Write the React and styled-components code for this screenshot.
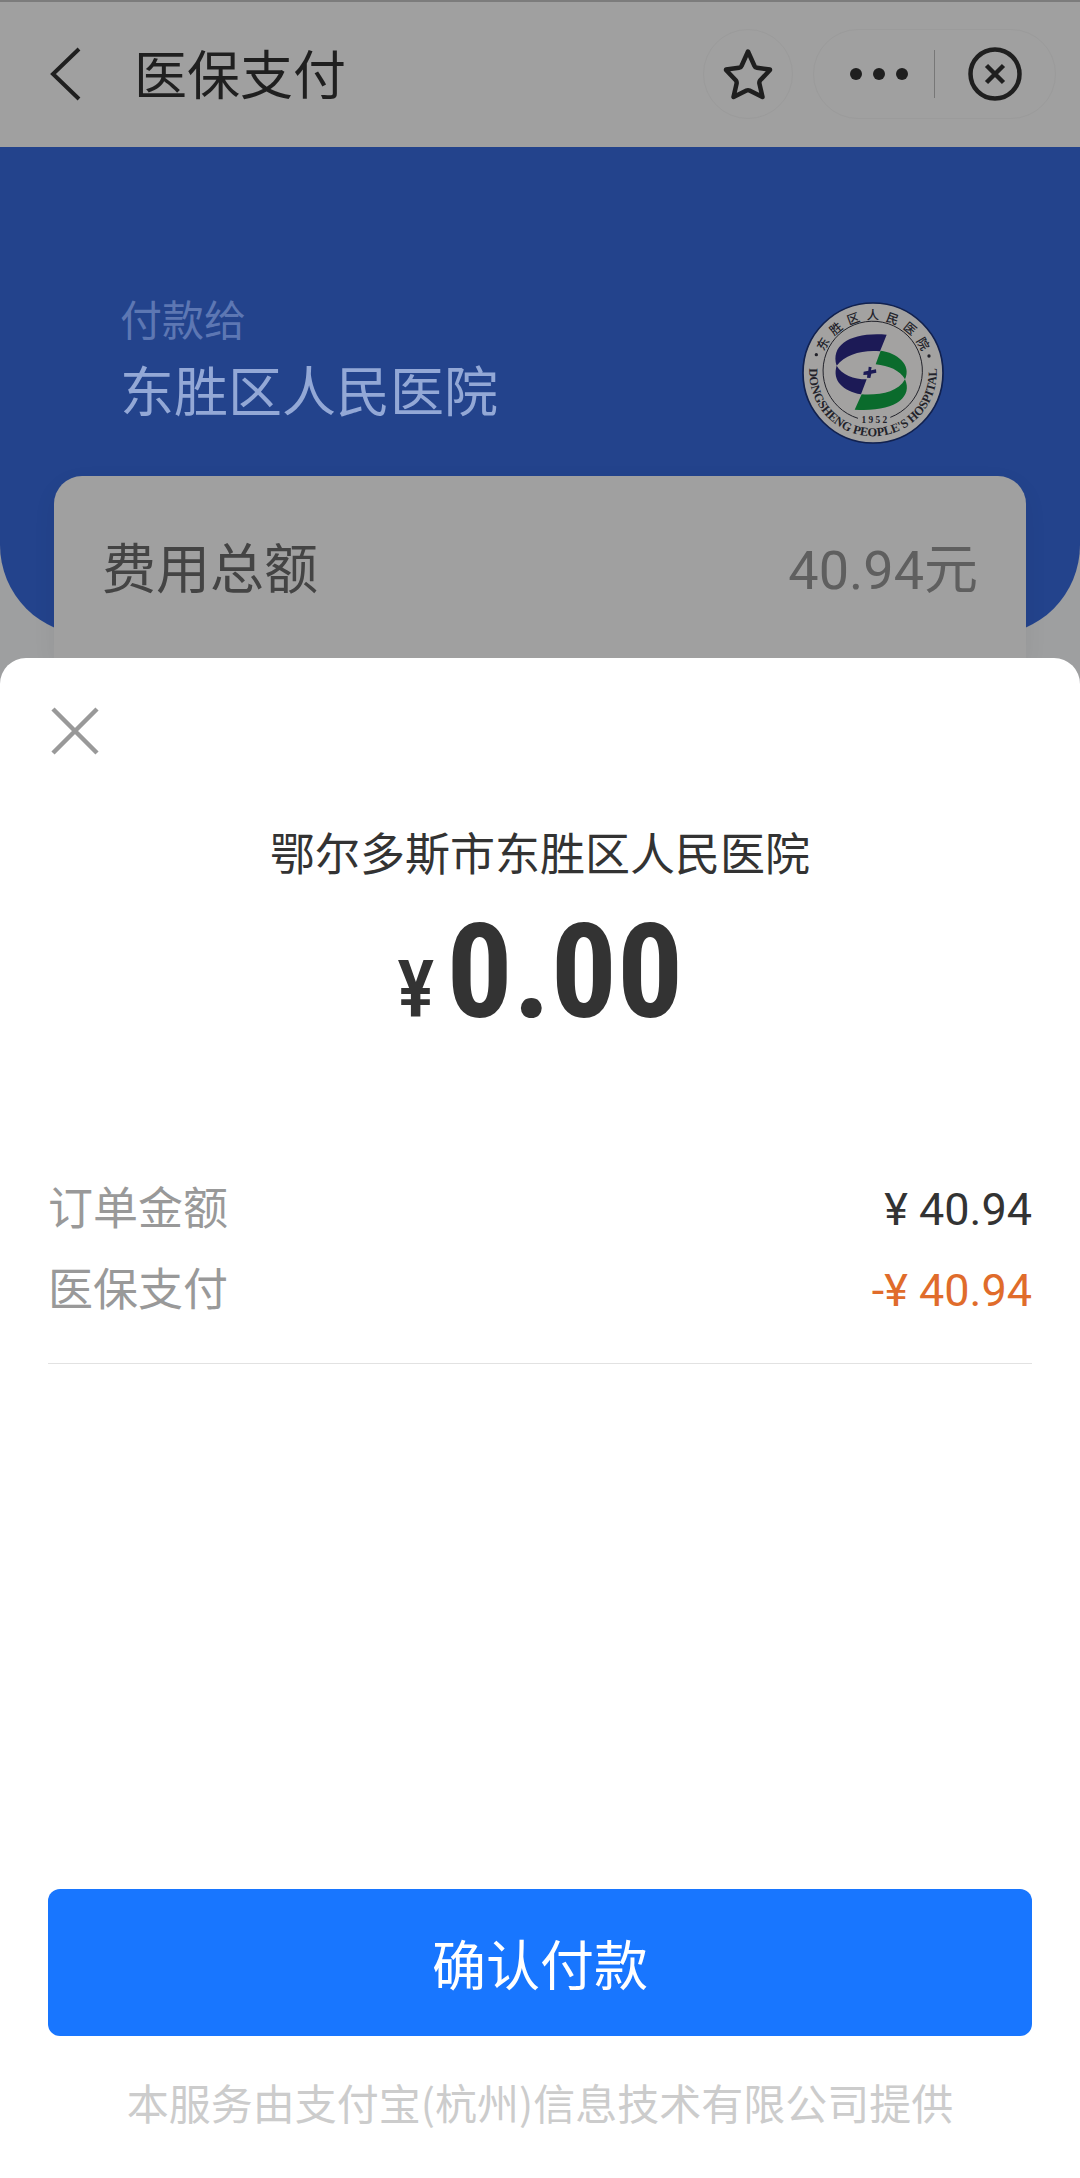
import React, { useState } from "react";
import styled, { createGlobalStyle } from "styled-components";

const GlobalStyle = createGlobalStyle`
    * {
        box-sizing: border-box;
    }

    body {
        margin: 0;
        background-color: #9e9fa0;
        font-family: "Noto Sans CJK SC", sans-serif;
    }

    button {
        padding: 0;
        border: none;
        background: none;
        font-family: inherit;
        color: inherit;
        cursor: pointer;
    }

    svg {
        display: block;
    }
`;

const Page = styled.div`
    display: flex;
    flex-direction: column;
    min-height: 100vh;
`;

const NavBar = styled.header`
    display: flex;
    align-items: center;
    height: 147px;
    padding: 0 24px 0 42px;
    background-color: #a0a0a0;
    box-shadow: inset 0 2px 0 #7c7c7c;
    color: #1f1f1f;
`;

const BackButton = styled.button`
    padding: 0 8px;
`;

const NavTitle = styled.h1`
    flex: 1;
    margin: 0 0 0 44px;
    padding-bottom: 4px;
    font-size: 53px;
    line-height: 72px;
    font-weight: 400;
`;

const StarButton = styled.button`
    display: flex;
    align-items: center;
    justify-content: center;
    width: 90px;
    height: 90px;
    margin-right: 20px;
    border: 1px solid #9b9b9b;
    border-radius: 45px;
`;

const Capsule = styled.div`
    display: flex;
    align-items: center;
    height: 90px;
    border: 1px solid #9b9b9b;
    border-radius: 45px;
`;

const CapsuleButton = styled.button`
    display: flex;
    align-items: center;
    justify-content: ${props => props.$align || "center"};
    width: 120px;
    height: 88px;
    padding-right: ${props => (props.$align ? "26px" : "0")};
`;

const CapsuleLine = styled.span`
    width: 1px;
    height: 48px;
    background-color: #777777;
`;

const Hero = styled.section`
    display: flex;
    justify-content: space-between;
    align-items: flex-start;
    height: 488px;
    padding: 141px 135px 0 120px;
    border-radius: 0 0 90px 90px;
    background-color: #23438c;
`;

const PayLabel = styled.p`
    margin: 0;
    font-size: 42px;
    line-height: 60px;
    color: #5d77b3;
`;

const PayName = styled.h2`
    margin: 0;
    font-size: 54px;
    line-height: 82px;
    font-weight: 400;
    color: #93a8d6;
`;

const LogoBox = styled.div`
    padding-top: 13px;
`;

const TotalCard = styled.section`
    display: flex;
    justify-content: space-between;
    align-items: baseline;
    height: 182px;
    margin: -159px 54px 0;
    padding: 54px 48px 0;
    border-radius: 28px 28px 0 0;
    background-color: #a0a0a0;
    box-shadow: 0 8px 24px rgba(0, 0, 0, 0.06);
    font-size: 54px;
    line-height: 72px;
    color: #444444;
`;

const TotalValue = styled.span`
    font-family: Roboto, "Noto Sans CJK SC", sans-serif;
    color: #5f5f5f;
`;

const Sheet = styled.section`
    position: relative;
    display: flex;
    flex: 1;
    flex-direction: column;
    padding: 46px 48px;
    border-radius: 26px 26px 0 0;
    background-color: #ffffff;
    color: #333333;
`;

const CloseButton = styled.button`
    align-self: flex-start;
`;

const Merchant = styled.h2`
    margin: 62px 0 0;
    font-size: 45px;
    line-height: 64px;
    font-weight: 400;
    text-align: center;
`;

const Amount = styled.p`
    display: flex;
    justify-content: center;
    align-items: baseline;
    gap: 12px;
    height: 136px;
    margin: 20px 0 0;
    font-family: "Roboto Condensed", "Liberation Sans Narrow", sans-serif;
    font-size: 131px;
    line-height: 136px;
    font-weight: 700;
`;

const Currency = styled.span`
    font-size: 80px;
    font-weight: 500;
`;

const Bill = styled.dl`
    margin: 125px 0 0;
    padding-bottom: 36px;
    border-bottom: 1px solid #e2e2e2;
`;

const BillRow = styled.div`
    display: flex;
    justify-content: space-between;
    align-items: baseline;
    height: 81px;
    font-size: 45px;
    line-height: 81px;
`;

const BillLabel = styled.dt`
    color: #999999;
`;

const BillValue = styled.dd`
    margin: 0;
    font-family: Roboto, "Noto Sans CJK SC", sans-serif;
    color: ${props => (props.$discount ? "#e06c2b" : "#333333")};
`;

const ConfirmButton = styled.button`
    height: 147px;
    margin-top: auto;
    border-radius: 12px;
    background-color: #1876ff;
    color: #ffffff;
    font-size: 54px;
`;

const Provider = styled.p`
    margin: 36px 0 0;
    font-size: 42px;
    line-height: 60px;
    text-align: center;
    color: #cccccc;
`;

const BackIcon = () => (
    <svg width="32" height="54" viewBox="0 0 32 54" fill="none" stroke="currentColor" strokeWidth="4">
        <path d="M29 2 3 27l26 25" />
    </svg>
);

const StarIcon = () => (
    <svg width="52" height="54" viewBox="0 0 52 54" fill="none" stroke="currentColor" strokeWidth="4.5" strokeLinejoin="round">
        <path d="M26 4.5 32.5 19Q33 20.500 35 20.800L48 22.500V23L38 33.500Q37 35 37.500 37L40.500 50 27.500 43.500Q26 42.800 24.500 43.500L11.500 50 14.500 37Q15 35 14 33.500L4 23V22.500L17 20.800Q19 20.500 19.500 19Z" />
    </svg>
);

const DotsIcon = () => (
    <svg width="58" height="12" viewBox="0 0 58 12" fill="currentColor">
        <circle cx="6" cy="6" r="6" />
        <circle cx="29" cy="6" r="6" />
        <circle cx="52" cy="6" r="6" />
    </svg>
);

const ExitIcon = () => (
    <svg width="54" height="54" viewBox="0 0 54 54" fill="none" stroke="currentColor" strokeWidth="4.5">
        <circle cx="27" cy="27" r="24.500" />
        <path d="m18.500 18.500 17 17m0-17-17 17" />
    </svg>
);

const CloseIcon = () => (
    <svg width="54" height="54" viewBox="0 0 54 54" fill="none" stroke="#999999" strokeWidth="4.5">
        <path d="m5 5 44 44m0-44L5 49" />
    </svg>
);

const HospitalLogo = () => (
    <svg width="144" height="144" viewBox="65 62 432 432" role="img" aria-label="东胜区人民医院">
        <defs>
            <path id="ring-top" d="M121 278a160 160 0 0 1 320 0" />
            <path id="ring-bottom" d="M94 238a191 191 0 1 0 374 0" />
        </defs>
        <circle cx="281" cy="278" r="210" fill="#a3a2a1" stroke="#11214f" strokeWidth="5" />
        <path d="M236 414A149 149 0 1 1 333 411" fill="none" stroke="#22222a" strokeWidth="3" />
        <path d="M322 163 302 213C250 208 198 222 172 256C152 192 218 154 322 163Z" fill="#1c1a56" />
        <path d="M172 256C188 283 222 297 262 297L245 342C190 332 158 300 172 256Z" fill="#1c1a56" />
        <path d="M304 211C352 217 398 252 377 297C362 270 328 256 289 252Z" fill="#0a6b2c" />
        <path d="M377 297C402 352 344 396 226 388L247 342C302 345 356 336 377 297Z" fill="#0a6b2c" />
        <path d="m268 259 9 2-2 9 15-3 1 10-15 3-3 13-10-1 1-9-12 1 1-10 14-3Z" fill="#1c1a56" />
        <circle cx="111" cy="223" r="5" fill="#22222a" />
        <circle cx="449" cy="227" r="5" fill="#22222a" />
        <text fontFamily="'Noto Sans CJK SC', sans-serif" fontSize="37" fontWeight="500" fill="#22222a" textAnchor="middle">
            <textPath href="#ring-top" startOffset="50%">{"东胜区人民医院".split("").join("\u2002")}</textPath>
        </text>
        <text fontFamily="'Liberation Serif', serif" fontSize="37" fontWeight="700" fill="#22222a" textAnchor="middle">
            <textPath href="#ring-bottom" startOffset="50%">DONGSHENG PEOPLE'S HOSPITAL</textPath>
        </text>
        <text x="285" y="428" fontFamily="'Liberation Serif', serif" fontSize="28" fontWeight="700" fill="#22222a" textAnchor="middle">
            1 9 5 2
        </text>
    </svg>
);

const bill = [
    { name: "订单金额", price: "¥ 40.94" },
    { name: "医保支付", price: "-¥ 40.94", discount: true },
];

const App = () => {
    const [starred, setStarred] = useState(false);

    return (
        <>
            <GlobalStyle />
            <Page>
                <NavBar>
                    <BackButton aria-label="返回"><BackIcon /></BackButton>
                    <NavTitle>医保支付</NavTitle>
                    <StarButton aria-label="收藏" aria-pressed={starred} onClick={() => setStarred(!starred)}>
                        <StarIcon />
                    </StarButton>
                    <Capsule>
                        <CapsuleButton aria-label="更多" $align="flex-end"><DotsIcon /></CapsuleButton>
                        <CapsuleLine />
                        <CapsuleButton aria-label="退出"><ExitIcon /></CapsuleButton>
                    </Capsule>
                </NavBar>
                <Hero>
                    <div>
                        <PayLabel>付款给</PayLabel>
                        <PayName>东胜区人民医院</PayName>
                    </div>
                    <LogoBox>
                        <HospitalLogo />
                    </LogoBox>
                </Hero>
                <TotalCard>
                    <span>费用总额</span>
                    <TotalValue>40.94元</TotalValue>
                </TotalCard>
                <Sheet>
                    <CloseButton aria-label="关闭"><CloseIcon /></CloseButton>
                    <Merchant>鄂尔多斯市东胜区人民医院</Merchant>
                    <Amount>
                        <Currency>¥</Currency>
                        <span>0.00</span>
                    </Amount>
                    <Bill>
                        {bill.map((item, index) => (
                            <BillRow key={index}>
                                <BillLabel>{item.name}</BillLabel>
                                <BillValue $discount={item.discount}>{item.price}</BillValue>
                            </BillRow>
                        ))}
                    </Bill>
                    <ConfirmButton>确认付款</ConfirmButton>
                    <Provider>本服务由支付宝(杭州)信息技术有限公司提供</Provider>
                </Sheet>
            </Page>
        </>
    );
};

export default App;
